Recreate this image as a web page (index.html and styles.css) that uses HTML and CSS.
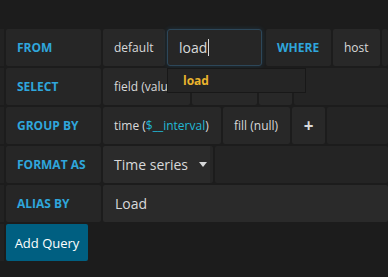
FILE: index.html
```html
<!DOCTYPE html>
<html lang="en">
<head>
<meta charset="UTF-8">
<title>Query editor</title>
<link rel="stylesheet" href="styles.css">
</head>
<body>

<div class="editor">
    <div class="row">
        <div class="gutter"></div>
        <div class="label w-label">FROM</div>
        <div class="seg w-default">default</div>
        <div class="typeahead-wrap">
            <div class="input focus">load<span class="caret"></span></div>
            <div class="typeahead">
                <div class="typeahead-item">load</div>
            </div>
        </div>
        <div class="label w-where">WHERE</div>
        <div class="seg w-host">host</div>
        <div class="filler"></div>
    </div>

    <div class="row">
        <div class="gutter"></div>
        <div class="label w-label">SELECT</div>
        <div class="seg w-field">field (value)</div>
        <div class="seg w-mean"></div>
        <div class="seg w-plus"></div>
        <div class="filler"></div>
    </div>

    <div class="row">
        <div class="gutter"></div>
        <div class="label w-label">GROUP BY</div>
        <div class="seg w-time">time (<span class="var">$__interval</span>)</div>
        <div class="seg w-fill">fill (null)</div>
        <div class="seg w-plus plus">+</div>
        <div class="filler"></div>
    </div>

    <div class="row">
        <div class="gutter"></div>
        <div class="label w-label">FORMAT AS</div>
        <div class="select w-select">Time series <span class="select-caret"></span></div>
        <div class="filler"></div>
    </div>

    <div class="row">
        <div class="gutter"></div>
        <div class="label w-label">ALIAS BY</div>
        <input class="alias" type="text" value="Load">
    </div>

    <div class="row">
        <div class="gutter"></div>
        <button class="btn-add">Add Query</button>
    </div>
</div>

</body>
</html>
```

FILE: styles.css
```css
:root {
    --bg: #1c1c1c;
    --label-bg: #262626;
    --seg-bg: #282828;
    --filler-bg: #242424;
    --text: #d8d9da;
    --keyword: #2fa6dc;
    --variable: #22b9d6;
    --yellow: #eab42d;
}
body {
    background: var(--bg);
    color: var(--text);
    font-family: "Open Sans", "Liberation Sans", sans-serif;
    margin: 0;
    padding: 29px 0 0;
    overflow: hidden;
}
.editor {
    display: flex;
    flex-direction: column;
    gap: 2px;
}
.row {
    display: flex;
    gap: 2px;
    height: 37px;
}
.gutter {
    width: 4px;
    background: #222;
    flex: none;
}
.label, .seg, .select, .input, .filler {
    display: flex;
    align-items: center;
    flex: none;
    border-radius: 2px;
    box-sizing: border-box;
}
.label {
    background: var(--label-bg);
    color: var(--keyword);
    font-size: 12px;
    font-weight: bold;
    padding: 0 11px;
}
.seg {
    background: var(--seg-bg);
    font-size: 12px;
    padding: 0 11px;
    white-space: nowrap;
    overflow: hidden;
}
.seg.plus {
    justify-content: center;
    font-size: 17px;
    font-weight: bold;
    padding: 0;
}
.var {
    color: var(--variable);
}
.filler {
    flex: 1;
    background: var(--filler-bg);
}
.w-label { width: 95px; }
.w-default { width: 62px; }
.w-where { width: 65px; margin-left: 2px; }
.w-host { width: 47px; }
.w-field { width: 87px; }
.w-mean { width: 65px; }
.w-plus { width: 33px; }
.w-time { width: 118px; }
.w-fill { width: 67px; }
.w-select { width: 110px; }

.typeahead-wrap {
    position: relative;
    width: 95px;
    flex: none;
}
.input {
    height: 100%;
    background: var(--label-bg);
    font-size: 14px;
    padding: 0 11px;
    border: 1px solid #2d4759;
    border-radius: 3px;
    box-shadow: 0 0 5px rgba(51, 160, 229, 0.2);
}
.caret {
    display: inline-block;
    width: 1px;
    height: 17px;
    background: var(--text);
    margin-left: 1px;
}
.typeahead {
    position: absolute;
    top: 39px;
    left: 0;
    width: 139px;
    height: 25px;
    box-sizing: border-box;
    background: #252525;
    border: 1px solid #181818;
    z-index: 2;
}
.typeahead-item {
    color: var(--yellow);
    font-size: 12px;
    font-weight: bold;
    line-height: 23px;
    padding: 0 15px;
}
.select {
    background: #2b2b2b;
    font-size: 14px;
    padding: 0 3px 0 11px;
    justify-content: space-between;
    border-right: 3px solid #262626;
}
.select-caret {
    width: 0;
    height: 0;
    border-top: 5px solid var(--text);
    border-left: 4px solid transparent;
    border-right: 4px solid transparent;
}
.alias {
    flex: 1;
    min-width: 0;
    margin: 0;
    border: none;
    border-radius: 2px;
    background: #2a2a2a;
    color: var(--text);
    font-family: inherit;
    font-size: 14px;
    padding: 0 12px;
    outline: none;
}
.btn-add {
    width: 82px;
    margin: 0;
    border: none;
    border-radius: 2px;
    background: #005f81;
    color: #fff;
    font-family: inherit;
    font-size: 13px;
    padding: 0;
    cursor: pointer;
}
```
